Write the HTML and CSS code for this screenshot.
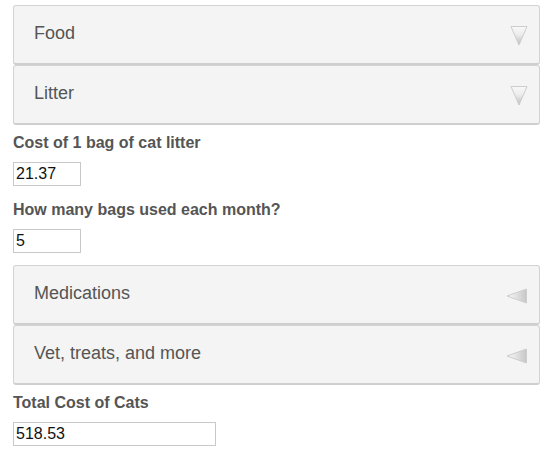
FILE: index.html
```html
<!DOCTYPE html>
<html lang="en">
<head>
  <meta charset="UTF-8">
  <title>Cat Cost Calculator</title>
  <link rel="stylesheet" href="styles.css">
</head>
<body>
  <svg width="0" height="0" class="defs">
    <defs>
      <linearGradient id="down-fill" x1="0" y1="0" x2="0" y2="1">
        <stop offset="0" stop-color="#f8f8f8"/>
        <stop offset="0.45" stop-color="#ececec"/>
        <stop offset="1" stop-color="#bcbcbc"/>
      </linearGradient>
      <linearGradient id="left-fill" x1="0" y1="0" x2="1" y2="0">
        <stop offset="0" stop-color="#f8f8f8"/>
        <stop offset="0.4" stop-color="#e6e6e6"/>
        <stop offset="1" stop-color="#c6c6c6"/>
      </linearGradient>
    </defs>
  </svg>
  <div class="calc">
    <div class="panel">
      <span>Food</span>
      <svg class="arrow" width="18" height="21" viewBox="0 0 18 21"><polygon points="1,1.5 17,1.5 9,20" fill="url(#down-fill)" stroke="#cdcdcd"/></svg>
    </div>
    <div class="panel">
      <span>Litter</span>
      <svg class="arrow" width="18" height="21" viewBox="0 0 18 21"><polygon points="1,1.5 17,1.5 9,20" fill="url(#down-fill)" stroke="#cdcdcd"/></svg>
    </div>
    <div class="group">
      <div class="field">
        <label>Cost of 1 bag of cat litter</label>
        <input class="small" type="text" value="21.37">
      </div>
      <div class="field">
        <label>How many bags used each month?</label>
        <input class="small" type="text" value="5">
      </div>
    </div>
    <div class="panel">
      <span>Medications</span>
      <svg class="arrow" width="22" height="16" viewBox="0 0 22 16"><polygon points="1,8 20.5,1 20.5,15" fill="url(#left-fill)" stroke="#cdcdcd"/></svg>
    </div>
    <div class="panel">
      <span>Vet, treats, and more</span>
      <svg class="arrow" width="22" height="16" viewBox="0 0 22 16"><polygon points="1,8 20.5,1 20.5,15" fill="url(#left-fill)" stroke="#cdcdcd"/></svg>
    </div>
    <div class="group">
      <div class="field">
        <label>Total Cost of Cats</label>
        <input class="wide" type="text" value="518.53">
      </div>
    </div>
  </div>
</body>
</html>
```

FILE: styles.css
```css
* {
  box-sizing: border-box;
}
body {
  margin: 0;
  background: #fff;
  font-family: 'Liberation Sans', Arial, sans-serif;
  color: #555;
}
.defs {
  position: absolute;
}
.calc {
  padding: 5px 14px 0 13px;
}
.panel {
  display: flex;
  justify-content: space-between;
  align-items: center;
  height: 60px;
  padding: 0 11px 0 20px;
  background: #f4f4f4;
  border: 1px solid #d3d3d3;
  border-bottom: 2px solid #cfcfcf;
  border-radius: 3px;
  font-size: 18px;
  color: #555;
}
.panel span {
  margin-top: -3px;
}
.arrow {
  display: block;
  margin-top: 2px;
}
.group {
  padding-bottom: 12px;
}
.field {
  padding-top: 9px;
}
.field + .field {
  padding-top: 15px;
}
.field label {
  display: block;
  font-size: 16px;
  line-height: 18px;
  font-weight: bold;
  margin-bottom: 10px;
}
.field input {
  display: block;
  height: 24px;
  padding: 1px 2px;
  border: 1px solid #c9c9c9;
  font-family: 'Liberation Sans', Arial, sans-serif;
  font-size: 16px;
  color: #111;
}
.small {
  width: 68px;
}
.wide {
  width: 203px;
}
```
